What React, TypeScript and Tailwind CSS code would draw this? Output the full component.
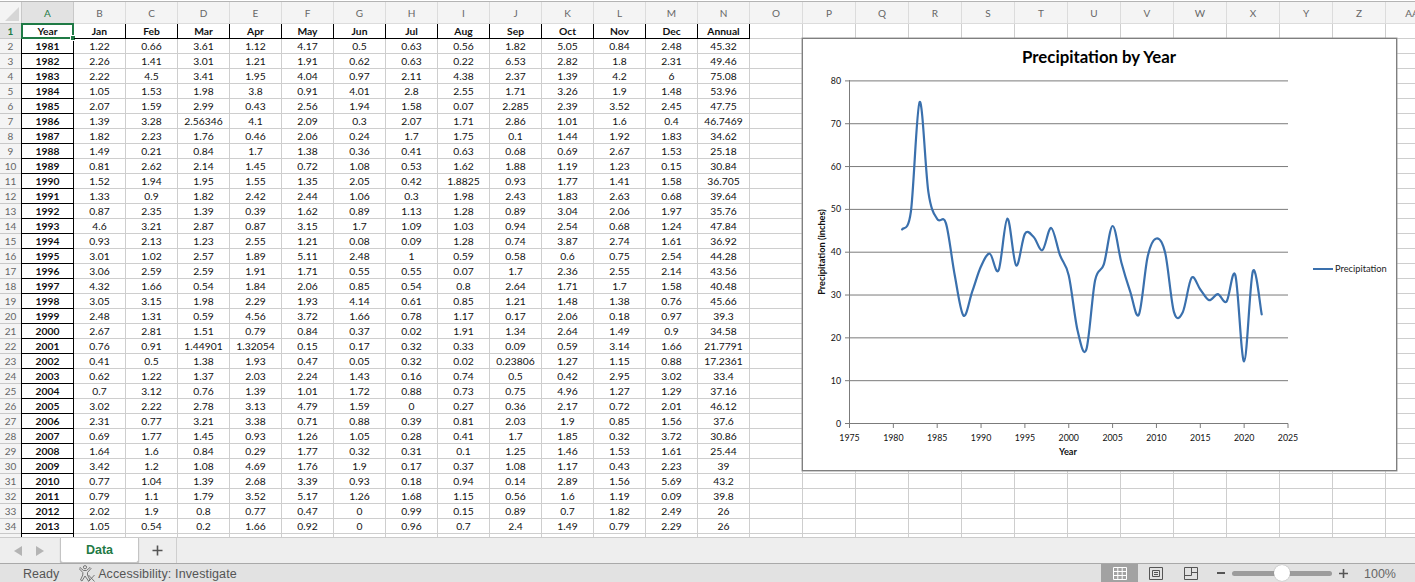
const columns = ["A", "B", "C", "D", "E", "F", "G", "H", "I", "J", "K", "L", "M", "N", "O", "P", "Q", "R", "S", "T", "U", "V", "W", "X", "Y", "Z", "AA"];
const headers = ["Year", "Jan", "Feb", "Mar", "Apr", "May", "Jun", "Jul", "Aug", "Sep", "Oct", "Nov", "Dec", "Annual"];

const rows = [
  "1981 1.22 0.66 3.61 1.12 4.17 0.5 0.63 0.56 1.82 5.05 0.84 2.48 45.32",
  "1982 2.26 1.41 3.01 1.21 1.91 0.62 0.63 0.22 6.53 2.82 1.8 2.31 49.46",
  "1983 2.22 4.5 3.41 1.95 4.04 0.97 2.11 4.38 2.37 1.39 4.2 6 75.08",
  "1984 1.05 1.53 1.98 3.8 0.91 4.01 2.8 2.55 1.71 3.26 1.9 1.48 53.96",
  "1985 2.07 1.59 2.99 0.43 2.56 1.94 1.58 0.07 2.285 2.39 3.52 2.45 47.75",
  "1986 1.39 3.28 2.56346 4.1 2.09 0.3 2.07 1.71 2.86 1.01 1.6 0.4 46.7469",
  "1987 1.82 2.23 1.76 0.46 2.06 0.24 1.7 1.75 0.1 1.44 1.92 1.83 34.62",
  "1988 1.49 0.21 0.84 1.7 1.38 0.36 0.41 0.63 0.68 0.69 2.67 1.53 25.18",
  "1989 0.81 2.62 2.14 1.45 0.72 1.08 0.53 1.62 1.88 1.19 1.23 0.15 30.84",
  "1990 1.52 1.94 1.95 1.55 1.35 2.05 0.42 1.8825 0.93 1.77 1.41 1.58 36.705",
  "1991 1.33 0.9 1.82 2.42 2.44 1.06 0.3 1.98 2.43 1.83 2.63 0.68 39.64",
  "1992 0.87 2.35 1.39 0.39 1.62 0.89 1.13 1.28 0.89 3.04 2.06 1.97 35.76",
  "1993 4.6 3.21 2.87 0.87 3.15 1.7 1.09 1.03 0.94 2.54 0.68 1.24 47.84",
  "1994 0.93 2.13 1.23 2.55 1.21 0.08 0.09 1.28 0.74 3.87 2.74 1.61 36.92",
  "1995 3.01 1.02 2.57 1.89 5.11 2.48 1 0.59 0.58 0.6 0.75 2.54 44.28",
  "1996 3.06 2.59 2.59 1.91 1.71 0.55 0.55 0.07 1.7 2.36 2.55 2.14 43.56",
  "1997 4.32 1.66 0.54 1.84 2.06 0.85 0.54 0.8 2.64 1.71 1.7 1.58 40.48",
  "1998 3.05 3.15 1.98 2.29 1.93 4.14 0.61 0.85 1.21 1.48 1.38 0.76 45.66",
  "1999 2.48 1.31 0.59 4.56 3.72 1.66 0.78 1.17 0.17 2.06 0.18 0.97 39.3",
  "2000 2.67 2.81 1.51 0.79 0.84 0.37 0.02 1.91 1.34 2.64 1.49 0.9 34.58",
  "2001 0.76 0.91 1.44901 1.32054 0.15 0.17 0.32 0.33 0.09 0.59 3.14 1.66 21.7791",
  "2002 0.41 0.5 1.38 1.93 0.47 0.05 0.32 0.02 0.23806 1.27 1.15 0.88 17.2361",
  "2003 0.62 1.22 1.37 2.03 2.24 1.43 0.16 0.74 0.5 0.42 2.95 3.02 33.4",
  "2004 0.7 3.12 0.76 1.39 1.01 1.72 0.88 0.73 0.75 4.96 1.27 1.29 37.16",
  "2005 3.02 2.22 2.78 3.13 4.79 1.59 0 0.27 0.36 2.17 0.72 2.01 46.12",
  "2006 2.31 0.77 3.21 3.38 0.71 0.88 0.39 0.81 2.03 1.9 0.85 1.56 37.6",
  "2007 0.69 1.77 1.45 0.93 1.26 1.05 0.28 0.41 1.7 1.85 0.32 3.72 30.86",
  "2008 1.64 1.6 0.84 0.29 1.77 0.32 0.31 0.1 1.25 1.46 1.53 1.61 25.44",
  "2009 3.42 1.2 1.08 4.69 1.76 1.9 0.17 0.37 1.08 1.17 0.43 2.23 39",
  "2010 0.77 1.04 1.39 2.68 3.39 0.93 0.18 0.94 0.14 2.89 1.56 5.69 43.2",
  "2011 0.79 1.1 1.79 3.52 5.17 1.26 1.68 1.15 0.56 1.6 1.19 0.09 39.8",
  "2012 2.02 1.9 0.8 0.77 0.47 0 0.99 0.15 0.89 0.7 1.82 2.49 26",
  "2013 1.05 0.54 0.2 1.66 0.92 0 0.96 0.7 2.4 1.49 0.79 2.29 26",
].map((r) => r.split(" "));

// years after 2013 are below the fold, read off the chart
const laterAnnual = [34, 31.3, 28.8, 30.2, 28.5, 34.6, 14.5, 35.6, 25.5];
const annual = [...rows.map((r) => Number(r[13])), ...laterAnnual];

const toX = (year: number) => 47.5 + (year - 1975) * 8.77;
const toY = (value: number) => 385.5 - value * 4.2825;

function smoothPath() {
  const pts = annual.map((v, i) => [toX(1981 + i), toY(v)]);
  let d = `M${pts[0][0]} ${pts[0][1]}`;
  for (let i = 0; i < pts.length - 1; i++) {
    const p0 = pts[Math.max(i - 1, 0)];
    const p1 = pts[i];
    const p2 = pts[i + 1];
    const p3 = pts[Math.min(i + 2, pts.length - 1)];
    const c1x = p1[0] + (p2[0] - p0[0]) / 6;
    const c1y = p1[1] + (p2[1] - p0[1]) / 6;
    const c2x = p2[0] - (p3[0] - p1[0]) / 6;
    const c2y = p2[1] - (p3[1] - p1[1]) / 6;
    d += ` C${c1x} ${c1y} ${c2x} ${c2y} ${p2[0]} ${p2[1]}`;
  }
  return d;
}

function RowNumber({ n }: { n?: number }) {
  return (
    <div className="flex items-center justify-center border-r border-b border-[#c8c8c8] bg-[#f4f4f4] text-[10px] text-[#666]">
      {n}
    </div>
  );
}

function Chart() {
  const yTicks = [0, 10, 20, 30, 40, 50, 60, 70, 80];
  const xTicks = [1975, 1980, 1985, 1990, 1995, 2000, 2005, 2010, 2015, 2020, 2025];
  return (
    <div className="absolute left-[802px] top-[36px] h-[433px] w-[595px] border border-[#7f7f7f] bg-white shadow-[0_0_0_0.5px_#9a9a9a]">
      <svg className="absolute -left-px -top-px" width="595" height="433" viewBox="0 0 595 433">
        {yTicks.map((t) => (
          <g key={t}>
            <line x1="43" x2={t === 0 ? 47.5 : 486} y1={toY(t)} y2={toY(t)} stroke="#7b7b7b" />
            <text x="39" y={toY(t) + 3} textAnchor="end" fontSize="8.8" fill="#111">
              {t}
            </text>
          </g>
        ))}
        <line x1="47.5" x2="486" y1="385.5" y2="385.5" stroke="#7b7b7b" />
        <line x1="47.5" x2="47.5" y1="42" y2="386" stroke="#7b7b7b" />
        {xTicks.map((t) => (
          <g key={t}>
            <line x1={toX(t)} x2={toX(t)} y1="385.5" y2="390" stroke="#7b7b7b" />
            <text x={toX(t)} y="403" textAnchor="middle" fontSize="8.8" fill="#111">
              {t}
            </text>
          </g>
        ))}
        <path d={smoothPath()} fill="none" stroke="#3a70ad" strokeWidth="2.2" strokeLinecap="round" />
        <line x1="511" x2="531" y1="231" y2="231" stroke="#3a70ad" strokeWidth="2" />
        <text x="533" y="234" fontSize="9.3" fill="#222">
          Precipitation
        </text>
        <text x="297" y="25" textAnchor="middle" fontSize="16.8" fontWeight="700" fill="#000">
          Precipitation by Year
        </text>
        <text x="266" y="417" textAnchor="middle" fontSize="9.2" fontWeight="700" fill="#111">
          Year
        </text>
        <text
          transform="translate(23 214) rotate(-90)"
          textAnchor="middle"
          fontSize="9.2"
          fontWeight="700"
          fill="#111"
        >
          Precipitation (inches)
        </text>
      </svg>
    </div>
  );
}

function Sheet() {
  return (
    <div className="relative h-[535px] overflow-hidden">
      <div className="grid w-max grid-cols-[22px_repeat(14,52px)_repeat(13,53px)] grid-rows-[22px_repeat(35,15px)] text-[10.3px] leading-none text-[#111]">
        {/* column letters */}
        <div className="relative border-r border-b border-[#c8c8c8] bg-[#f4f4f4]">
          <div className="absolute bottom-[2px] right-[2px] h-0 w-0 border-b-[14px] border-l-[14px] border-b-[#d6d6d6] border-l-transparent" />
        </div>
        {columns.map((c, i) => (
          <div
            key={c}
            className={
              i === 0
                ? "flex items-center justify-center border-r border-b border-[#c8c8c8] bg-[#e2e2e2] text-[10px] text-[#1f7a45]"
                : "flex items-center justify-center border-r border-b border-[#dcdcdc] bg-[#f4f4f4] text-[10px] text-[#666]"
            }
          >
            {c}
          </div>
        ))}

        {/* row 1 */}
        <div className="flex items-center justify-center border-r border-b border-[#c8c8c8] bg-[#e2e2e2] text-[10px] font-bold text-[#1f7a45]">
          1
        </div>
        {columns.map((c, i) =>
          i < 14 ? (
            <div
              key={c}
              className="relative flex items-center justify-center border-r border-b border-black font-bold"
            >
              {headers[i]}
              {i === 0 && (
                <>
                  <div className="absolute -left-px -top-px h-[16px] w-[53px] border-2 border-[#1f7a45]" />
                  <div className="absolute -bottom-[3px] -right-[3px] h-[6px] w-[6px] border border-white bg-[#1f7a45]" />
                </>
              )}
            </div>
          ) : (
            <div key={c} className="border-r border-b border-[#cecece]" />
          )
        )}

        {/* data rows */}
        {rows.map((row, r) => (
          <div key={row[0]} className="contents">
            <RowNumber n={r + 2} />
            {columns.map((c, i) => (
              <div
                key={c}
                className={
                  i === 0
                    ? "flex items-center justify-center border-x border-b border-x-black border-b-black font-bold -ml-px"
                    : "flex items-center justify-center border-r border-b border-[#cecece]"
                }
              >
                {row[i]}
              </div>
            ))}
          </div>
        ))}

        {/* row 35, mostly cut off */}
        <RowNumber />
        {columns.map((c, i) => (
          <div
            key={c}
            className={i === 0 ? "border-x border-black -ml-px" : "border-r border-b border-[#cecece]"}
          />
        ))}
      </div>
      <Chart />
    </div>
  );
}

function TabBar() {
  return (
    <div className="flex h-[26px] items-start border-t border-[#cbcbcb] bg-[#eeeeee]">
      <div className="flex h-full w-[60px] items-center pl-[14px]">
        <svg width="8" height="10" viewBox="0 0 8 10">
          <path d="M8 0V10L0 5Z" fill="#b4b4b4" />
        </svg>
        <svg className="ml-[14px]" width="8" height="10" viewBox="0 0 8 10">
          <path d="M0 0V10L8 5Z" fill="#b4b4b4" />
        </svg>
      </div>
      <div className="flex h-[25px] w-[79px] items-center justify-center rounded-b-[3px] border-x border-b border-[#c4c4c4] bg-white font-['Liberation_Sans',sans-serif] text-[12.5px] font-bold text-[#1f7a45] shadow-[0_1px_1px_#aaaaaa]">
        Data
      </div>
      <div className="flex h-full w-[38px] items-center justify-center border-r border-[#cfcfcf]">
        <svg width="11" height="11" viewBox="0 0 11 11">
          <path d="M5.5 0.5V10.5M0.5 5.5H10.5" stroke="#555" strokeWidth="1.6" />
        </svg>
      </div>
    </div>
  );
}

function StatusBar() {
  return (
    <div className="flex h-[19px] items-center border-t border-[#a9a9a9] bg-[#e2e2e2] font-['Liberation_Sans',sans-serif] text-[12.5px] text-[#555]">
      <span className="ml-[23px] mt-[3px]">Ready</span>
      <svg className="ml-[20px] mt-[1px]" width="17" height="17" viewBox="0 0 17 17" fill="none" stroke="#6a6a6a" strokeWidth="0.9">
        <circle cx="6" cy="2.2" r="1.6" />
        <path d="M1 2.5L4.5 5.5H7.5L11 2.5L12 3.5L8.5 7.5V10L11 15L9.5 16L6 11L3 16L1.5 15L3.8 10V7.5L0 3.5Z" />
        <path d="M9.5 10L15.5 16.5M15.5 10L9.5 16.5" />
      </svg>
      <span className="ml-[2px] mt-[3px] tracking-[0.01em]">Accessibility: Investigate</span>

      <div className="ml-auto flex h-full items-center">
        <div className="flex h-full w-[37px] items-center justify-center bg-[#a2a2a2]">
          <svg width="14" height="13" viewBox="0 0 14 13" fill="none" stroke="#fff">
            <path d="M.5.5H13.5V12.5H.5ZM.5 4.5H13.5M.5 8.5H13.5M4.8.5V12.5M9.2.5V12.5" />
          </svg>
        </div>
        <div className="flex h-full w-[35px] items-center justify-center">
          <svg width="14" height="13" viewBox="0 0 14 13" fill="none" stroke="#555">
            <path d="M.5.5H13.5V12.5H.5ZM3.5 3.5H10.5V9.5H3.5ZM5 5.5H9M5 7.5H9" />
          </svg>
        </div>
        <div className="flex h-full w-[36px] items-center justify-center">
          <svg width="14" height="13" viewBox="0 0 14 13" fill="none" stroke="#555">
            <path d="M.5.5H13.5V12.5H.5ZM.5 8.5H7.5V.5M7.5 5.5H13.5" />
          </svg>
        </div>
        <div className="ml-[8px] h-[2px] w-[8px] bg-[#555]" />
        <div className="relative ml-[7px] mt-[1px] h-[5px] w-[100px] rounded-full bg-[#9c9c9c]">
          <div className="absolute -top-[6px] left-[42px] h-[16px] w-[16px] rounded-full bg-white shadow-[0_0_1px_#888]" />
        </div>
        <svg className="ml-[7px]" width="9" height="9" viewBox="0 0 9 9">
          <path d="M4.5 0V9M0 4.5H9" stroke="#555" strokeWidth="1.6" />
        </svg>
        <span className="ml-[16px] mr-[20px] mt-[3px] w-[31px] whitespace-nowrap text-[#666]">100%</span>
      </div>
    </div>
  );
}

export default function App() {
  return (
    <div className="flex h-[582px] w-[1415px] flex-col overflow-hidden bg-white font-['Lato',sans-serif]">
      <div className="h-[2px] border-b border-[#b4b4b4] bg-white" />
      <Sheet />
      <TabBar />
      <StatusBar />
    </div>
  );
}
